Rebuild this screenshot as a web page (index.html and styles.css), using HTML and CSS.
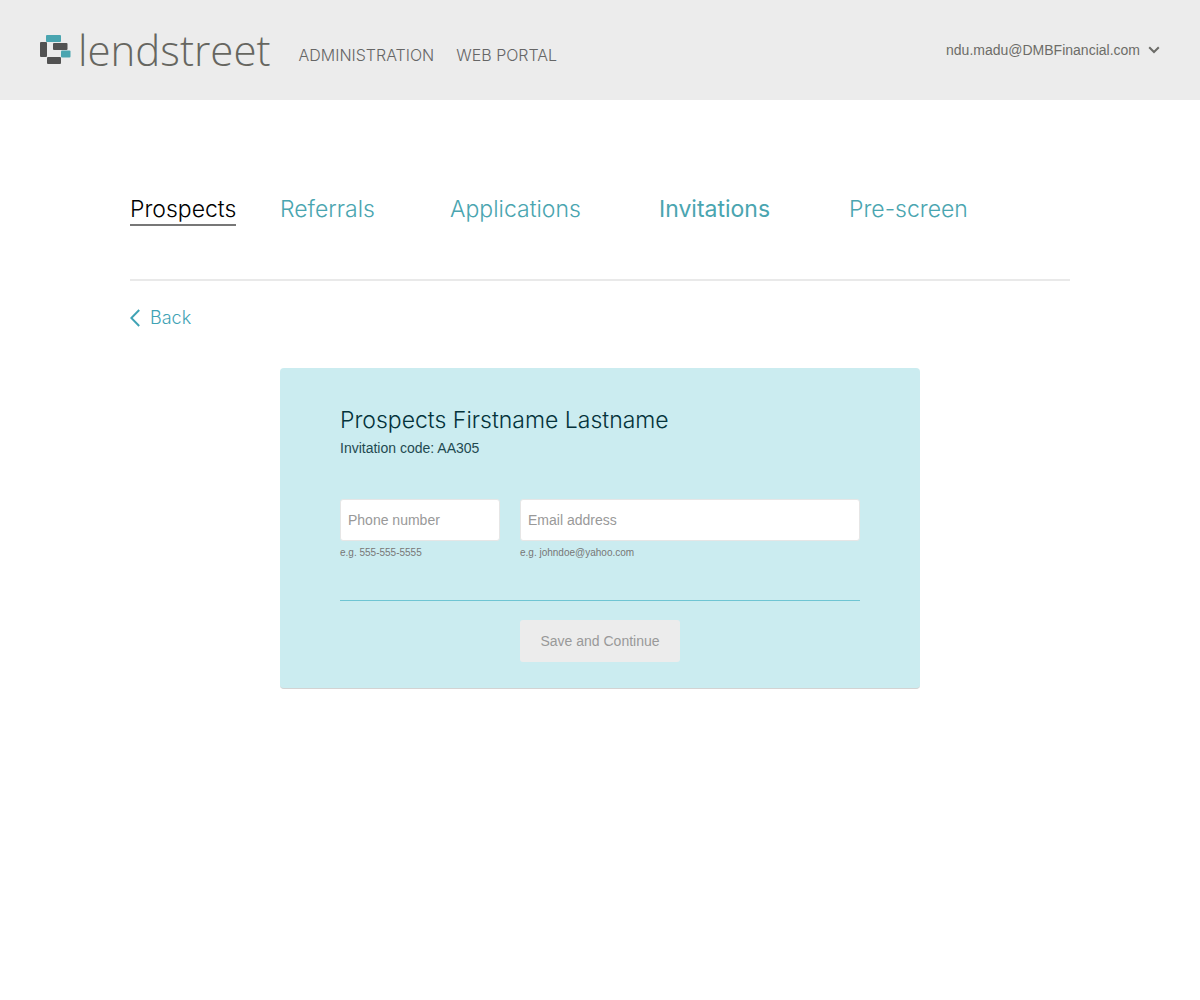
FILE: index.html
```html
<!DOCTYPE html>
<html lang="en">
<head>
    <meta charset="UTF-8">
    <meta name="viewport" content="width=device-width, initial-scale=1.0">
    <title>Lendstreet - Prospects</title>
    <link rel="stylesheet" href="styles.css">
</head>
<body>
    <header class="header">
        <a class="logo" href="#">
            <svg class="logo-mark" width="32" height="32" viewBox="0 0 32 32" aria-hidden="true">
                <rect class="teal" x="6" y="1" width="15" height="7" rx="1" />
                <rect class="dark" x="0" y="8" width="7" height="15" rx="1" />
                <rect class="dark" x="13" y="9" width="14.5" height="7" rx="1" />
                <rect class="teal" x="21" y="16.5" width="9.5" height="7" rx="1" />
                <rect class="dark" x="7" y="23" width="14" height="7" rx="1" />
            </svg>
            <span class="logo-text">lendstreet</span>
        </a>
        <nav class="main-nav">
            <a href="#">ADMINISTRATION</a>
            <a href="#">WEB PORTAL</a>
        </nav>
        <button class="user-menu" type="button">
            ndu.madu@DMBFinancial.com
            <svg width="12" height="8" viewBox="0 0 12 8" aria-hidden="true">
                <path d="M1.2 1.2L6 6L10.8 1.2" />
            </svg>
        </button>
    </header>

    <main class="content">
        <nav class="tabs">
            <a class="active" href="#">Prospects</a>
            <a href="#">Referrals</a>
            <a href="#">Applications</a>
            <a class="strong" href="#">Invitations</a>
            <a href="#">Pre-screen</a>
        </nav>

        <a class="back" href="#">
            <svg width="10" height="18" viewBox="0 0 10 18" aria-hidden="true">
                <path d="M9.2 1L1.3 9L9.2 17" />
            </svg>
            Back
        </a>

        <form class="card">
            <h1>Prospects Firstname Lastname</h1>
            <p class="code">Invitation code: AA305</p>

            <div class="fields">
                <div class="field">
                    <input type="tel" id="phone" placeholder="Phone number">
                    <label for="phone">e.g. 555-555-5555</label>
                </div>
                <div class="field">
                    <input type="email" id="email" placeholder="Email address">
                    <label for="email">e.g. johndoe@yahoo.com</label>
                </div>
            </div>

            <div class="actions">
                <button class="save" type="submit" disabled>Save and Continue</button>
            </div>
        </form>
    </main>
</body>
</html>
```

FILE: styles.css
```css
* {
    box-sizing: border-box;
}

body {
    margin: 0;
    font-family: "Liberation Sans", Arial, sans-serif;
    font-size: 14px;
    background-color: #fff;
    color: #666;
}

a {
    text-decoration: none;
}

svg path {
    fill: none;
    stroke: currentColor;
    stroke-width: 2;
}

/* header */
.header {
    display: flex;
    align-items: center;
    min-height: 100px;
    padding: 0 40px;
    background-color: #ececec;
}

.logo {
    display: flex;
    align-items: center;
    gap: 6px;
    color: #666660;
}

.logo-text {
    font-family: "Open Sans", sans-serif;
    font-weight: 300;
    font-size: 42px;
    line-height: 48px;
}

.teal {
    fill: #4aa5b0;
}

.dark {
    fill: #525252;
}

.main-nav {
    display: flex;
    gap: 22px;
    margin-left: 28px;
    padding-top: 10px;
}

.main-nav a {
    font-family: Inter, sans-serif;
    font-weight: 300;
    font-size: 16px;
    line-height: 20px;
    color: #666;
}

.user-menu {
    display: flex;
    align-items: center;
    gap: 8px;
    margin-left: auto;
    padding: 0;
    border: none;
    background: none;
    font: inherit;
    color: #6c6c68;
    cursor: pointer;
}

/* page */
.content {
    max-width: 980px;
    margin: 0 auto;
    padding: 94px 20px 40px;
}

.tabs {
    display: grid;
    grid-template-columns: 150fr 170fr 209fr 190fr 221fr;
    justify-items: start;
    padding-bottom: 53px;
    border-bottom: 2px solid #e9e9e9;
}

.tabs a {
    font-family: Inter, sans-serif;
    font-weight: 300;
    font-size: 23px;
    line-height: 30px;
    color: #4aa5b0;
    border-bottom: 2px solid transparent;
}

.tabs .strong {
    font-weight: 400;
}

.tabs .active {
    color: #000;
    border-bottom-color: #777;
}

.back {
    display: inline-flex;
    align-items: center;
    gap: 10px;
    margin-top: 25px;
    font-family: Inter, sans-serif;
    font-weight: 300;
    font-size: 18px;
    line-height: 24px;
    color: #3fa3b5;
}

/* prospect form */
.card {
    max-width: 640px;
    margin: 38px auto 0;
    padding: 36px 60px 26px;
    border-bottom: 1px solid #d3d3d3;
    border-radius: 4px;
    background-color: #cbecf0;
}

.card h1 {
    margin: 0;
    font-family: Inter, sans-serif;
    font-weight: 300;
    font-size: 23px;
    line-height: 32px;
    color: #04333b;
}

.code {
    margin: 2px 0 0;
    line-height: 20px;
    color: #1f4a50;
}

.fields {
    display: grid;
    grid-template-columns: 160fr 340fr;
    gap: 20px;
    margin-top: 41px;
}

.field input {
    display: block;
    width: 100%;
    height: 42px;
    padding: 0 7px;
    border: 1px solid #e6e6e6;
    border-radius: 3px;
    background-color: #fff;
    font: inherit;
}

.field input::placeholder {
    color: #999;
    opacity: 1;
}

.field label {
    display: block;
    margin-top: 5px;
    font-size: 10px;
    line-height: 14px;
    color: #777;
}

.actions {
    display: flex;
    justify-content: center;
    margin-top: 40px;
    padding-top: 19px;
    border-top: 1px solid #6fc5d3;
}

.save {
    min-width: 160px;
    height: 42px;
    border: none;
    border-radius: 3px;
    background-color: #ececec;
    font: inherit;
    color: #999;
}
```
